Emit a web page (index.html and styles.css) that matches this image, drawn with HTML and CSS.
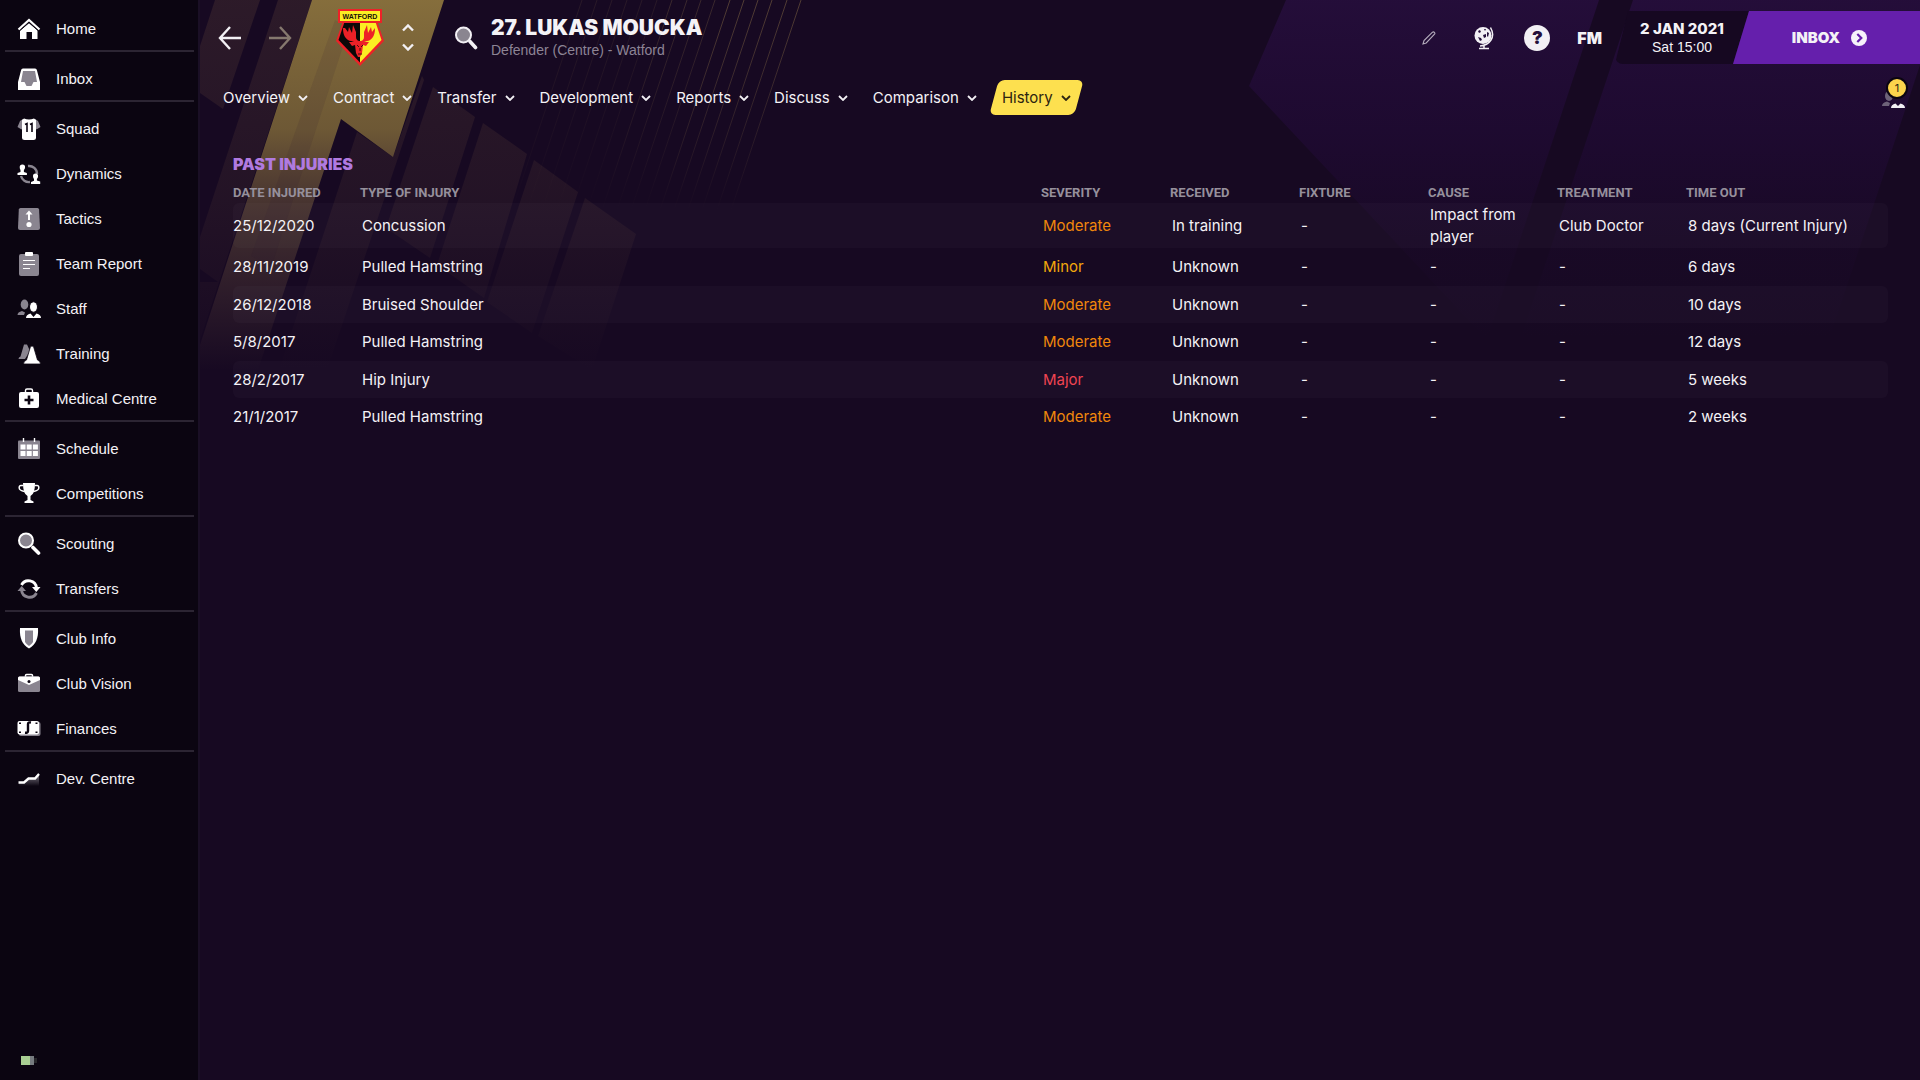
FILE: index.html
```html
<!DOCTYPE html>
<html lang="en">
<head>
  <meta charset="UTF-8" />
  <meta name="viewport" content="width=device-width, initial-scale=1.0"/>
  <title>Lukas Moucka - Past Injuries</title>
  <link rel="stylesheet" href="styles.css">
</head>
<body>

  <!-- SIDEBAR -->
  <nav class="sidebar" aria-label="Main">
    <ul class="menu">
      <li class="divided"><a href="#home">
        <svg viewBox="0 0 24 24"><path fill="#fff" d="M12 6l8.500 7.300V22H15v-7H9.500v7H3v-8.700z"/><path d="M1.500 12.500L12 3l10.500 9.500" fill="none" stroke="#fff" stroke-width="2.200"/><path d="M2.500 14L12 5.600 21.500 14" fill="none" stroke="#0c0512" stroke-width="1"/></svg>
        Home</a></li>
      <li class="divided"><a href="#inbox">
        <svg viewBox="0 0 24 24"><path fill="#fff" d="M4 3.500Q4.300 1.500 6 1.500h12q1.700 0 2 2L23 15v8H1v-8z"/><path fill="#8a8590" d="M6 4h12l2 11h-3.500l-2 4h-5l-2-4H4z"/></svg>
        Inbox</a></li>
      <li><a href="#squad">
        <svg viewBox="0 0 24 24"><path fill="#8a8590" d="M6 2L3 4 .5 10l4 2.500L8 8zM18 2l3 2 2.500 6-4 2.500L16 8z"/><path fill="#fff" d="M7 1.500q5 2 10 0l2 1.500v18q0 2-2.500 2h-9Q5 23 5 21V3z"/><path d="M8 7.500l2-1V15M13 7.500l2-1V15" fill="none" stroke="#0c0512" stroke-width="1.600"/></svg>
        Squad</a></li>
      <li><a href="#dynamics">
        <svg viewBox="0 0 24 24"><path d="M11 4a8 8 0 0 1 9 8M13 20a8 8 0 0 1-9-6" fill="none" stroke="#8a8590" stroke-width="2.400"/><path fill="#fff" d="M5.500 2.500a2.600 2.600 0 0 1 2.600 2.600q0 1.800-1.200 3V10l3 1v2H.5v-2l3-1V8Q2.700 7 2.700 5.200a2.700 2.700 0 0 1 2.800-2.700zM18.500 11.500a2.600 2.600 0 0 1 2.600 2.600q0 1.800-1.200 3v1.500l3.300 1V22H14v-2l3-1.200V17q-1-1-1-2.800a2.600 2.600 0 0 1 2.500-2.700z"/></svg>
        Dynamics</a></li>
      <li><a href="#tactics">
        <svg viewBox="0 0 24 24"><path fill="#8a8590" d="M3.500 1h17q1.500 0 1.600 1.500L23 21q0 2-2 2H3q-2 0-2-2l.8-18.500Q2 1 3.500 1z"/><path d="M12 13V6" stroke="#fff" stroke-width="2"/><path fill="#fff" d="M12 3.500l3.500 4h-7z"/><circle cx="12" cy="17.500" r="2.600" fill="#fff"/></svg>
        Tactics</a></li>
      <li><a href="#report">
        <svg viewBox="0 0 24 24"><rect x="2" y="2" width="20" height="22" rx="2" fill="#8a8590"/><rect x="8" y="0" width="8" height="4" rx="1" fill="#fff"/><path d="M6 8.500h12M6 12.500h12M6 16.500h7" stroke="#fff" stroke-width="1.200"/></svg>
        Team Report</a></li>
      <li><a href="#staff">
        <svg viewBox="0 0 24 24"><ellipse cx="7.500" cy="7.500" rx="3.800" ry="5" fill="#8a8590"/><path fill="#8a8590" d="M.5 18q0-3 4.500-4l3 1.500-1 2.500z"/><ellipse cx="16.500" cy="10" rx="4" ry="5.200" fill="#fff" stroke="#0c0512"/><path fill="#fff" d="M9 21q0-3.500 4.500-4.500L16.500 20l3-3.500Q24 17.500 24 21z"/></svg>
        Staff</a></li>
      <li><a href="#training">
        <svg viewBox="0 0 24 24"><path fill="#8a8590" d="M7 2.500h3L13 9l-5 8H1.500q0-2 2-2.500z"/><path fill="#fff" stroke="#0c0512" stroke-width=".8" d="M13.500 4.500q1.500-1 3 0L20.500 18q3 1 3 4H6.500q0-3 3-4z"/></svg>
        Training</a></li>
      <li><a href="#medical">
        <svg viewBox="0 0 24 24"><path d="M8.500 6V3.500q0-1.500 1.500-1.500h4q1.500 0 1.500 1.500V6" fill="none" stroke="#fff" stroke-width="1.400"/><rect x="2" y="5" width="20" height="16" rx="2" fill="#fff"/><path d="M12 8.500v9M7.500 13h9" stroke="#0c0512" stroke-width="2.600"/></svg>
        Medical Centre</a></li>
      <li class="divided-above"><a href="#schedule">
        <svg viewBox="0 0 24 24"><rect x="1" y="3.500" width="22" height="18.500" rx="1" fill="#8a8590"/><path d="M6.500 1v4M17.500 1v4" stroke="#fff" stroke-width="1.400"/><path fill="#fff" d="M3.500 7.500h5v5h-5zM9.700 7.500h5v5h-5zM15.900 7.500h5v5h-5zM3.500 14h5v5h-5zM9.700 14h5v5h-5zM15.900 14h5v5h-5z"/></svg>
        Schedule</a></li>
      <li><a href="#competitions">
        <svg viewBox="0 0 24 24"><path fill="#fff" d="M6 1h12q0 11-4.500 13v4l3 1.500V21h-9v-1.500l3-1.500v-4Q6 12 6 1z"/><path d="M6.500 3.500H4Q2 3.500 2.200 6T7.500 9.500M17.500 3.500H20q2 0 1.800 2.500t-5.300 3.500" fill="none" stroke="#fff" stroke-width="1.500"/></svg>
        Competitions</a></li>
      <li class="divided-above"><a href="#scouting">
        <svg viewBox="0 0 24 24"><circle cx="9" cy="8.500" r="7" fill="#8a8590" stroke="#fff" stroke-width="2"/><path d="M16 15.500l5.500 5.500" stroke="#fff" stroke-width="3.600" stroke-linecap="round"/></svg>
        Scouting</a></li>
      <li><a href="#transfers">
        <svg viewBox="0 0 24 24"><path d="M4.500 8a8 8 0 0 1 15 3" fill="none" stroke="#fff" stroke-width="2.800"/><path fill="#fff" d="M15 10h8.500l-4.200 5z"/><path d="M19.500 16a8 8 0 0 1-15-3" fill="none" stroke="#8a8590" stroke-width="2.800"/><path fill="#8a8590" d="M9 14H.5l4.200-5z"/></svg>
        Transfers</a></li>
      <li class="divided-above"><a href="#club">
        <svg viewBox="0 0 24 24"><path fill="#fff" d="M3 1h18q1 15-9 20.500Q2 16 3 1z"/><path fill="#8a8590" d="M8 3.500h8V15q-1.500 2.500-4 4-2.500-1.500-4-4z"/></svg>
        Club Info</a></li>
      <li><a href="#vision">
        <svg viewBox="0 0 24 24"><path d="M8.500 5V3.500q0-1 1-1h5q1 0 1 1V5" fill="none" stroke="#fff" stroke-width="1.500"/><rect x="1" y="4.500" width="22" height="15.500" rx="1.500" fill="#8a8590"/><path fill="#fff" d="M1 6q0-1.500 1.500-1.500h19Q23 4.500 23 6v2l-11 5L1 8z"/><circle cx="12" cy="9.500" r="1.500" fill="#0c0512"/></svg>
        Club Vision</a></li>
      <li><a href="#finances">
        <svg viewBox="0 0 24 24"><rect x="2" y="5" width="21.500" height="14" rx="2" fill="#8a8590"/><rect x=".5" y="4" width="21.500" height="13.500" rx="2" fill="#fff"/><path d="M14 5.500q-3-.5-3 1.500v7q0 2-3 1.800" fill="none" stroke="#0c0512" stroke-width="2.400"/><path fill="#0c0512" d="M2 5.500h2v1.500H2zM18.500 5.500h2v1.500h-2zM2 14.500h2V16H2zM18.500 14.500h2V16h-2z"/></svg>
        Finances</a></li>
      <li class="divided-above"><a href="#dev">
        <svg viewBox="0 0 24 24"><defs><linearGradient id="devFade" x1="0" y1="0" x2="0" y2="1"><stop offset="0" stop-color="#8a8590"/><stop offset="1" stop-color="#8a8590" stop-opacity="0"/></linearGradient></defs><path fill="url(#devFade)" d="M2 16h5l5-5h6l4-5v13H2z"/><path d="M1.500 15.500H7l4.500-4H18l4-4.500" fill="none" stroke="#fff" stroke-width="2.400"/></svg>
        Dev. Centre</a></li>
    </ul>
    <svg class="battery" viewBox="0 0 18 12"><rect x="1" y="1" width="9" height="9" fill="#a9cf93"/><rect x="10" y="1" width="4" height="9" fill="#777c80"/><rect x="14" y="3" width="3" height="5" fill="#26262a"/></svg>
  </nav>

  <main class="main">
    <!-- BACKGROUND STRIPES -->
    <svg class="backdrop" viewBox="200 0 1720 500" preserveAspectRatio="xMinYMin slice" aria-hidden="true">
      <defs>
        <linearGradient id="gold" gradientUnits="userSpaceOnUse" x1="0" y1="0" x2="0" y2="370">
          <stop offset="0" stop-color="#8a723d" stop-opacity=".96"/>
          <stop offset=".35" stop-color="#836c3a" stop-opacity=".8"/>
          <stop offset=".55" stop-color="#775e3e" stop-opacity=".5"/>
          <stop offset=".8" stop-color="#6b5040" stop-opacity=".25"/>
          <stop offset="1" stop-color="#6b5040" stop-opacity="0"/>
        </linearGradient>
        <linearGradient id="brown" gradientUnits="userSpaceOnUse" x1="0" y1="0" x2="0" y2="370">
          <stop offset="0" stop-color="#6a4c3c" stop-opacity=".26"/>
          <stop offset=".5" stop-color="#6a4c3c" stop-opacity=".16"/>
          <stop offset="1" stop-color="#6a4c3c" stop-opacity="0"/>
        </linearGradient>
        <linearGradient id="violet" gradientUnits="userSpaceOnUse" x1="0" y1="0" x2="0" y2="340">
          <stop offset="0" stop-color="#4a1a7c" stop-opacity=".26"/>
          <stop offset=".4" stop-color="#380e66" stop-opacity=".2"/>
          <stop offset=".7" stop-color="#380e66" stop-opacity=".06"/>
          <stop offset="1" stop-color="#380e66" stop-opacity="0"/>
        </linearGradient>
        <linearGradient id="line" gradientUnits="userSpaceOnUse" x1="0" y1="0" x2="0" y2="210">
          <stop offset="0" stop-color="#8a6f45" stop-opacity=".5"/>
          <stop offset="1" stop-color="#8a6f45" stop-opacity="0"/>
        </linearGradient>
      </defs>
      <g fill="url(#brown)">
        <path d="M215 0h45l-37 109-23-16V46z"/>
        <path d="M278 0h34L200 340v-58l18 0-18-13v-32z"/>
        <path d="M357 132l36 25 29-81 2 4-97 290h-48z"/>
        <path d="M433 87l42 30-45 141-44-30z"/>
        <path d="M483 123l44 31-43 144-47-33z"/>
        <path d="M534 160l44 32-46 141-45-31z"/>
        <path d="M585 198l51 36-44 136-54-34z"/>
      </g>
      <path fill="url(#gold)" d="M312 0h132l-51 157-52-38-83 251h-58v-25z"/>
      <path fill="#2a1830" fill-opacity=".1" d="M335 20l14 8-78 240-20-12z"/>
      <g stroke="url(#line)" stroke-width="1" fill="none">
        <path d="M801 0l-70 210M787 0l-70 210M772 0l-70 210M758 0l-70 210M744 0l-70 210M730 0l-70 210"/>
        <path opacity=".6" d="M715 0l-70 210M701 0l-70 210M687 0l-70 210M672 0l-70 210"/>
        <path opacity=".3" d="M657 0l-70 210M642 0l-70 210M627 0l-70 210M612 0l-70 210M597 0l-70 210M582 0l-70 210"/>
      </g>
      <path fill="url(#violet)" d="M1286 0h313l-112 340-238-254z"/>
      <path fill="url(#violet)" d="M1633 0h287v65l-91 275h-309z"/>
    </svg>

    <!-- HEADER -->
    <header class="header">
      <button class="icon-btn back" aria-label="Back"><svg viewBox="0 0 24 24"><path d="M23 12H2M12 1L2 12l10 11"/></svg></button>
      <button class="icon-btn forward" aria-label="Forward"><svg viewBox="0 0 24 24"><path d="M1 12h21M12 1l10 11-10 11"/></svg></button>

      <a class="crest" href="#watford" aria-label="Watford">
        <svg viewBox="0 0 48 57">
          <path d="M7 12h34l7 20-24 25L0 32z" fill="#ed2127"/>
          <path d="M8.500 13H24v40.500L2.500 31z" fill="#0a0808"/>
          <path d="M24 13h15.500l6 18L24 53.500z" fill="#fbee23"/>
          <path d="M9 19l3 4 1-5 3 6 1-8 3 7 0 5q0 3 3 4h2q3-1 3-4v-5l3-7 1 8 3-6 1 5 3-4q0 6-2 9-3 4-6 4l-3 1h5l-3 4-3-1-1 8-2 4h-2l-2-4-1-8-3 1-3-4h5l-3-1q-3 0-6-4-2-3-2-9z" fill="#ed2127"/>
          <path d="M21 36l2 2M27 36l-2 2M22 45h4M24 39v3" stroke="#40100f" stroke-width="1"/>
          <rect x="3" y="1" width="42" height="12" fill="#fbee23" stroke="#ed2127" stroke-width="2"/>
          <text x="24" y="10" class="crest-name">WATFORD</text>
        </svg>
      </a>
      <div class="stepper">
        <button aria-label="Previous player"><svg viewBox="0 0 12 8"><path d="M1 6.500l5-5 5 5"/></svg></button>
        <button aria-label="Next player"><svg viewBox="0 0 12 8"><path d="M1 1.500l5 5 5-5"/></svg></button>
      </div>
      <button class="search" aria-label="Search"><svg viewBox="0 0 24 24"><circle cx="9.500" cy="9" r="7.500" fill="#8a8590" stroke="#f2f0f4" stroke-width="2"/><path d="M16 15.500l5.500 6" stroke="#f2f0f4" stroke-width="3.600" stroke-linecap="round"/></svg></button>

      <div class="player">
        <h1>27. LUKAS MOUCKA</h1>
        <p>Defender (Centre) - Watford</p>
      </div>

      <div class="tools">
        <button class="edit" aria-label="Edit"><svg viewBox="0 0 14 14"><path d="M1 13l1-3.500L10.500 1.200q1-.8 1.900.1t.1 1.900L4.200 12z" fill="none" stroke="#b5adbd" stroke-width="1.100"/></svg></button>
        <button class="globe" aria-label="World"><svg viewBox="0 0 20 24"><circle cx="9" cy="9.500" r="8.500" fill="#f2f0f4"/><path d="M16.500 1.500q4 7 .5 12.500T6 20M10 20v3M5 22.500h10" fill="none" stroke="#f2f0f4" stroke-width="1.500"/><path fill="#240f3a" d="M4 5l2-1 1 2-2 1zM9 9l3-1v3l-2 1zM13 6l2 1-1 4-1-1zM4 11l3 1 1 2-2 1zM10 3l2 0-1 2z"/></svg></button>
        <button class="help" aria-label="Help">?</button>
        <button class="fm">FM</button>
      </div>

      <div class="date">
        <strong>2 JAN 2021</strong>
        <span>Sat 15:00</span>
      </div>
      <button class="inbox">INBOX
        <svg viewBox="0 0 16 16"><circle cx="8" cy="8" r="8" fill="#f6f2fa"/><path d="M6.300 4L10.300 8l-4 4" fill="none" stroke="#651fac" stroke-width="2.200"/></svg>
      </button>
    </header>

    <!-- TABS -->
    <div class="tabs">
      <button class="tab">Overview <svg viewBox="0 0 10 6"><path d="M1 1l4 4 4-4"/></svg></button>
      <button class="tab">Contract <svg viewBox="0 0 10 6"><path d="M1 1l4 4 4-4"/></svg></button>
      <button class="tab">Transfer <svg viewBox="0 0 10 6"><path d="M1 1l4 4 4-4"/></svg></button>
      <button class="tab">Development <svg viewBox="0 0 10 6"><path d="M1 1l4 4 4-4"/></svg></button>
      <button class="tab">Reports <svg viewBox="0 0 10 6"><path d="M1 1l4 4 4-4"/></svg></button>
      <button class="tab">Discuss <svg viewBox="0 0 10 6"><path d="M1 1l4 4 4-4"/></svg></button>
      <button class="tab">Comparison <svg viewBox="0 0 10 6"><path d="M1 1l4 4 4-4"/></svg></button>
      <button class="tab active">History <svg viewBox="0 0 10 6"><path d="M1 1l4 4 4-4"/></svg></button>
      <button class="watchers" aria-label="Scout watching">
        <svg viewBox="0 0 24 24"><ellipse cx="8" cy="10" rx="4" ry="5" fill="#6d6278"/><path fill="#6d6278" d="M1 20q0-3.500 5-4.500l3 1.500-1 3z"/><path fill="#f2f0f4" d="M10 22q0-3.500 4.500-4.500L17 20l2.500-2.500Q24 18.500 24 22z"/></svg>
        <span class="count">1</span>
      </button>
    </div>

    <!-- INJURY HISTORY -->
    <section class="injuries">
      <h2>PAST INJURIES</h2>
      <table>
        <thead>
          <tr>
            <th class="col-date">DATE INJURED</th>
            <th>TYPE OF INJURY</th>
            <th class="col">SEVERITY</th>
            <th class="col">RECEIVED</th>
            <th class="col">FIXTURE</th>
            <th class="col">CAUSE</th>
            <th class="col">TREATMENT</th>
            <th class="col-time">TIME OUT</th>
          </tr>
        </thead>
        <tbody>
          <tr><td>25/12/2020</td><td>Concussion</td><td class="moderate">Moderate</td><td>In training</td><td>-</td><td>Impact from player</td><td>Club Doctor</td><td>8 days (Current Injury)</td></tr>
          <tr><td>28/11/2019</td><td>Pulled Hamstring</td><td class="minor">Minor</td><td>Unknown</td><td>-</td><td>-</td><td>-</td><td>6 days</td></tr>
          <tr><td>26/12/2018</td><td>Bruised Shoulder</td><td class="moderate">Moderate</td><td>Unknown</td><td>-</td><td>-</td><td>-</td><td>10 days</td></tr>
          <tr><td>5/8/2017</td><td>Pulled Hamstring</td><td class="moderate">Moderate</td><td>Unknown</td><td>-</td><td>-</td><td>-</td><td>12 days</td></tr>
          <tr><td>28/2/2017</td><td>Hip Injury</td><td class="major">Major</td><td>Unknown</td><td>-</td><td>-</td><td>-</td><td>5 weeks</td></tr>
          <tr><td>21/1/2017</td><td>Pulled Hamstring</td><td class="moderate">Moderate</td><td>Unknown</td><td>-</td><td>-</td><td>-</td><td>2 weeks</td></tr>
        </tbody>
      </table>
    </section>
  </main>

</body>
</html>
```
FILE: styles.css
```css
* {
  box-sizing: border-box;
}

body {
  margin: 0;
  min-height: 100vh;
  display: grid;
  grid-template-columns: 200px 1fr;
  background: #170922;
  color: #f4f2f6;
  font-family: Inter, "Liberation Sans", sans-serif;
  font-size: 15px;
}

button {
  background: none;
  border: none;
  padding: 0;
  color: inherit;
  font: inherit;
  cursor: pointer;
}

svg {
  display: block;
}

/* sidebar */
.sidebar {
  display: flex;
  flex-direction: column;
  justify-content: space-between;
  background: #0b0511;
  border-right: 2px solid #1a0f25;
  font-family: "Liberation Sans", Arial, sans-serif;
}

.menu {
  list-style: none;
  margin: 0;
  padding: 5px 4px 0 5px;
}

.menu a {
  display: flex;
  align-items: center;
  gap: 15px;
  height: 45px;
  padding: 2px 0 0 12px;
  color: #f4f2f6;
  text-decoration: none;
}

.menu svg {
  width: 24px;
  height: 24px;
}

.menu .divided {
  border-bottom: 2px solid #2c2533;
  margin-bottom: 3px;
}

.menu .divided-above {
  border-top: 2px solid #2c2533;
  padding-top: 3px;
}

.battery {
  width: 18px;
  height: 12px;
  margin: 0 0 13px 20px;
}

/* main area */
.main {
  position: relative;
  min-width: 0;
  overflow: hidden;
}

.backdrop {
  position: absolute;
  top: 0;
  left: 0;
  width: 100%;
  height: 500px;
  z-index: 0;
}

.header,
.tabs,
.injuries {
  position: relative;
  z-index: 1;
}

.header {
  display: flex;
  align-items: center;
  height: 75px;
  padding-left: 18px;
}

.icon-btn svg {
  width: 24px;
  height: 24px;
  fill: none;
  stroke: #f2f0f4;
  stroke-width: 2.4;
}

.forward {
  margin-left: 26px;
}

.forward svg {
  stroke: #85786e;
}

.crest {
  margin-left: 44px;
}

.crest svg {
  width: 48px;
  height: 57px;
}

.crest-name {
  font: bold 7px "Liberation Sans", sans-serif;
  text-anchor: middle;
  fill: #1a1208;
}

.stepper {
  display: flex;
  flex-direction: column;
  gap: 11px;
  margin-left: 18px;
}

.stepper svg {
  width: 12px;
  height: 8px;
  fill: none;
  stroke: #f2f0f4;
  stroke-width: 2.4;
}

.search {
  margin-left: 40px;
}

.search svg {
  width: 24px;
  height: 24px;
}

.player {
  margin-left: 13px;
}

.player h1 {
  margin: 0;
  font-size: 21px;
  font-weight: 900;
  line-height: 24px;
}

.player p {
  margin: 0;
  font-family: "Liberation Sans", Arial, sans-serif;
  font-size: 14px;
  line-height: 20px;
  color: #8d8495;
}

.tools {
  display: flex;
  align-items: center;
  margin-left: auto;
  margin-right: 13px;
}

.edit svg {
  width: 14px;
  height: 14px;
}

.globe {
  margin-left: 38px;
}

.globe svg {
  width: 20px;
  height: 24px;
}

.help {
  width: 26px;
  height: 26px;
  margin-left: 30px;
  border-radius: 50%;
  background: #f2f0f4;
  color: #240f3a;
  font-size: 18px;
  font-weight: 900;
}

.fm {
  margin-left: 27px;
  font-size: 16px;
  font-weight: 900;
}

.date {
  display: flex;
  flex-direction: column;
  align-items: center;
  justify-content: center;
  width: 134px;
  height: 53px;
  background: #160821;
  border-radius: 8px 0 0 8px;
  clip-path: polygon(13px 0, 100% 0, 118px 100%, 0 100%);
}

.date strong {
  font-size: 15px;
  font-weight: 800;
  line-height: 18px;
}

.date span {
  font-family: "Liberation Sans", Arial, sans-serif;
  font-size: 14px;
  line-height: 18px;
}

.inbox {
  display: flex;
  align-items: center;
  justify-content: center;
  gap: 11px;
  width: 187px;
  height: 53px;
  margin-left: -16px;
  padding-left: 6px;
  background: #651fac;
  clip-path: polygon(16px 0, 100% 0, 100% 100%, 0 100%);
  font-size: 15px;
  font-weight: 900;
}

.inbox svg {
  width: 16px;
  height: 16px;
}

/* tabs */
.tabs {
  display: flex;
  align-items: center;
  gap: 1px;
  height: 45px;
  padding: 0 15px 0 11px;
}

.tab {
  position: relative;
  display: flex;
  align-items: center;
  gap: 8px;
  height: 35px;
  padding: 0 12px;
}

.tab svg {
  width: 10px;
  height: 6px;
  fill: none;
  stroke: #f2f0f4;
  stroke-width: 1.8;
}

.tab.active {
  color: #2c2410;
}

.tab.active::before {
  content: "";
  position: absolute;
  inset: 0 4px;
  z-index: -1;
  border-radius: 6px;
  background: #fde04f;
  transform: skewX(-15deg);
}

.tab.active svg {
  stroke: #2c2410;
}

.watchers {
  position: relative;
  margin-left: auto;
}

.watchers svg {
  width: 24px;
  height: 24px;
}

.count {
  position: absolute;
  top: -9px;
  right: -3px;
  width: 22px;
  height: 22px;
  border: 2px solid #0b0511;
  border-radius: 50%;
  background: #fcd44c;
  color: #2c2410;
  font-size: 11px;
  line-height: 18px;
}

/* injury table */
.injuries {
  padding: 32px 32px 0 33px;
}

.injuries h2 {
  margin: 0;
  color: #b07ae0;
  font-size: 16px;
  font-weight: 900;
  line-height: 24px;
}

.injuries table {
  width: 100%;
  margin-top: 5px;
  border-collapse: collapse;
  table-layout: fixed;
}

.injuries th {
  height: 22px;
  padding: 0;
  text-align: left;
  color: #96909c;
  font-family: Roboto, sans-serif;
  font-size: 13px;
  font-weight: 700;
}

.col-date {
  width: 127px;
}

.col {
  width: 129px;
}

.col-time {
  width: 202px;
}

.injuries td {
  height: 38px;
  padding: 0 0 0 2px;
  line-height: 22px;
}

.injuries td:first-child {
  padding-left: 0;
  border-radius: 6px 0 0 6px;
}

.injuries td:last-child {
  border-radius: 0 6px 6px 0;
}

.injuries tbody tr:nth-child(odd) td {
  height: 37px;
  background: rgba(255, 255, 255, 0.025);
}

.injuries tbody tr:first-child td {
  height: 45px;
}

.injuries .moderate {
  color: #f0870c;
}

.injuries .minor {
  color: #f2a70c;
}

.injuries .major {
  color: #ef4452;
}
```
